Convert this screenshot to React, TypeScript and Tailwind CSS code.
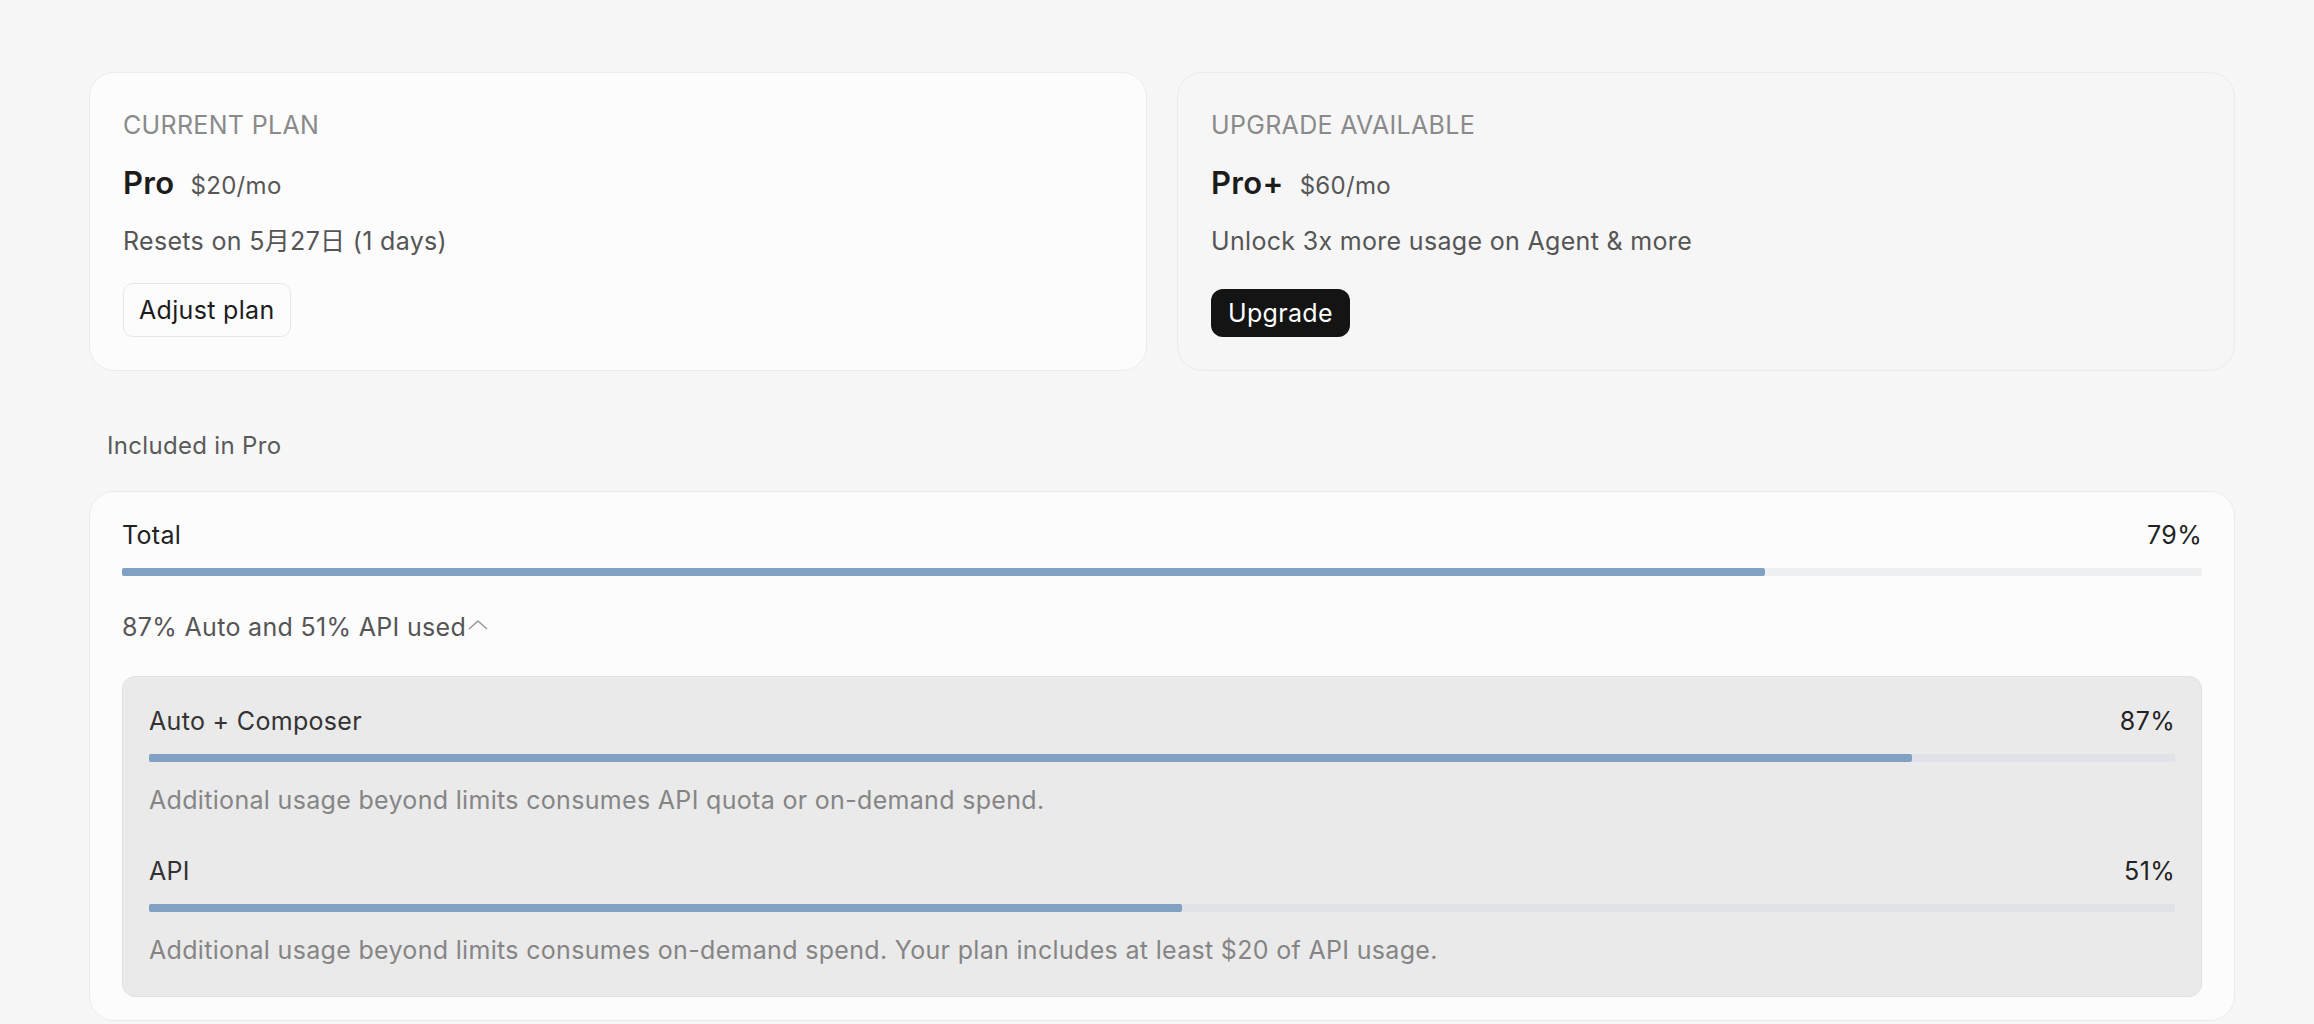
import React from 'react';

const font = "font-['Inter','Noto_Sans_CJK_SC',sans-serif] tracking-[0.32px]";

interface PlanCardI {
  label: string;
  name: string;
  price: string;
  note: string;
  action: JSX.Element;
  tone: 'current' | 'upgrade';
}

function PlanCard({ label, name, price, note, action, tone }: PlanCardI) {
  return (
    <div
      className={`flex flex-col rounded-[25px] border px-[33px] pt-[34px] pb-[33px] ${
        tone === 'current' ? 'bg-[#fcfcfc] border-[#ececec]' : 'bg-[#f6f6f6] border-[#ebebeb]'
      }`}
    >
      <div className="text-[25px] leading-[36px] uppercase text-[#8a8a8a]">{label}</div>
      <div className="mt-[20px] flex h-[40px] items-baseline gap-[16px]">
        <span className="text-[31px] leading-[40px] font-semibold text-[#1c1c1c]">{name}</span>
        <span className="text-[24px] leading-[24px] text-[#575757]">{price}</span>
      </div>
      <div className="mt-[20px] text-[25px] leading-[36px] text-[#555555]">{note}</div>
      {action}
    </div>
  );
}

interface BarI {
  label: string;
  value: number;
  track: string;
  labelColor: string;
}

function UsageBar({ label, value, track, labelColor }: BarI) {
  return (
    <div>
      <div className="flex justify-between text-[25px] leading-[36px]">
        <span className={labelColor}>{label}</span>
        <span className="text-[#222222]">{value}%</span>
      </div>
      <div className={`mt-[15px] h-[8px] ${track}`}>
        <div className="h-full rounded-[2px] bg-[#80a1c1]" style={{ width: `${value}%` }} />
      </div>
    </div>
  );
}

export default function App() {
  return (
    <div className={`min-h-screen bg-[#f7f7f7] pt-[72px] ${font}`}>
      <div className="ml-[89px] w-[2146px]">
        <div className="grid grid-cols-2 gap-[30px]">
          <PlanCard
            tone="current"
            label="Current Plan"
            name="Pro"
            price="$20/mo"
            note="Resets on 5月27日 (1 days)"
            action={
              <button className="mt-[24px] self-start rounded-[10px] border border-[#e6e6e6] bg-[#fcfcfc] px-[15px] py-[8px] text-[25px] leading-[36px] text-[#1c1c1c]">
                Adjust plan
              </button>
            }
          />
          <PlanCard
            tone="upgrade"
            label="Upgrade Available"
            name="Pro+"
            price="$60/mo"
            note="Unlock 3x more usage on Agent & more"
            action={
              <button className="mt-auto self-start rounded-[12px] bg-[#141414] px-[17px] py-[6px] text-[25px] leading-[36px] text-white">
                Upgrade
              </button>
            }
          />
        </div>

        <div className="mt-[59px] pl-[18px] text-[24px] leading-[32px] text-[#5a5a5a]">Included in Pro</div>

        <div className="mt-[29px] rounded-[25px] border border-[#ececec] bg-[#fcfcfc] px-[32px] pt-[25px] pb-[23px]">
          <UsageBar label="Total" value={79} track="bg-[#eef1f4]" labelColor="text-[#222222]" />

          <div className="mt-[33px] flex items-center text-[25px] leading-[36px] text-[#555555]">
            87% Auto and 51% API used
            <svg width="22" height="14" viewBox="0 0 22 14" className="ml-[1px] mt-[-4px]">
              <path d="M2 11 L11 3 L20 11" fill="none" stroke="#9a9a9a" strokeWidth="1.6" />
            </svg>
          </div>

          <div className="mt-[31px] rounded-[13px] border border-[#e1e1e1] bg-[#eaeaea] px-[26px] pt-[26px] pb-[28px]">
            <UsageBar label="Auto + Composer" value={87} track="bg-[#dfe3e7]" labelColor="text-[#333333]" />
            <div className="mt-[20px] text-[25px] leading-[36px] text-[#858585]">
              Additional usage beyond limits consumes API quota or on-demand spend.
            </div>
            <div className="mt-[35px]">
              <UsageBar label="API" value={51} track="bg-[#dfe3e7]" labelColor="text-[#333333]" />
            </div>
            <div className="mt-[20px] text-[25px] leading-[36px] text-[#858585]">
              Additional usage beyond limits consumes on-demand spend. Your plan includes at least $20 of API usage.
            </div>
          </div>
        </div>
      </div>
    </div>
  );
}
